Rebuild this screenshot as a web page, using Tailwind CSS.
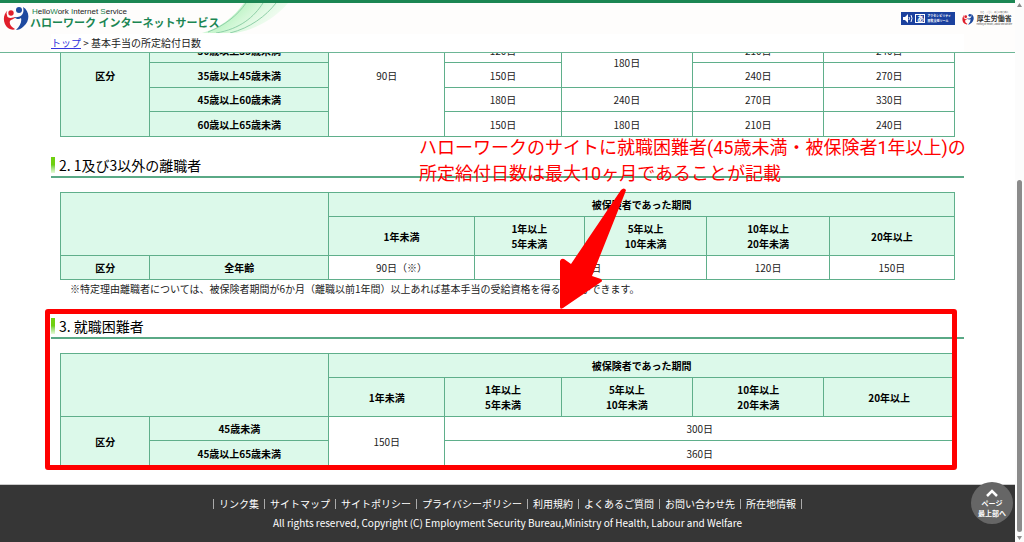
<!DOCTYPE html>
<html lang="ja">
<head>
    <meta charset="UTF-8">
    <meta name="viewport" content="width=device-width, initial-scale=1.0">
    <title>基本手当の所定給付日数</title>
    <script src="https://cdn.jsdelivr.net/npm/@tailwindcss/browser@4"></script>
</head>
<body class="flex min-h-screen overflow-hidden bg-white font-['Noto_Sans_CJK_JP',sans-serif] text-[10px] text-[#222]">
    <div class="flex min-w-0 flex-1 flex-col">

        <!-- header -->
        <header class="border-b border-[#6db696] bg-[#fefdfc]">
            <div class="flex h-[34px] items-center justify-between border-t-[3px] border-[#1b8653] pr-[3px]">
                <div class="relative flex h-full w-[290px] items-center pb-[2px] pl-[3px]">
                    <svg class="absolute top-0 right-0 h-[30px] w-[90px]" viewBox="0 0 90 30" fill="none" aria-hidden="true">
                        <defs>
                            <linearGradient id="wave" x1="0" y1="0.2" x2="1" y2="0.6">
                                <stop offset="0" stop-color="#c8f7cf" stop-opacity="0"/>
                                <stop offset="0.4" stop-color="#c4f5cb"/>
                                <stop offset="1" stop-color="#effdef" stop-opacity="0.3"/>
                            </linearGradient>
                        </defs>
                        <path d="M2 30C20 25 34 14 44 0H88C76 14 58 26 36 30Z" fill="url(#wave)"/>
                        <path d="M8 29C24 23 38 12 46 0M16 30C40 26 54 14 63 0M30 30C50 25 66 13 76 0" stroke="#8fd0a8"/>
                    </svg>
                    <svg class="h-6 w-[26px] shrink-0" viewBox="0 0 26 24" aria-hidden="true">
                        <circle cx="8" cy="7" r="2.700" fill="#e01e2b"/>
                        <path d="M5 4C-1 9 0 18 5 22C8 24 11 24 12 23C8 21 6 18 7 15C8 13 10 14 13 11C9 12 4 13 4 9C3 7 4 5 5 4Z" fill="#e01e2b"/>
                        <circle cx="16" cy="4" r="3" fill="#1f4aa0"/>
                        <path d="M20 1C27 5 27 15 21 20C18 23 15 24 13 24C17 20 19 16 18 12C16 14 13 13 11 11C17 12 22 9 20 1Z" fill="#1f4aa0"/>
                    </svg>
                    <div class="relative pl-px leading-none">
                        <p class="pl-[2px] font-['Liberation_Sans',sans-serif] text-[8px] leading-[8px] text-[#222]"><span class="text-[#1b8653]">H</span>ello<span class="text-[#1b8653]">W</span>ork <span class="text-[#1b8653]">I</span>nternet <span class="text-[#1b8653]">S</span>ervice</p>
                        <p class="text-[11px] leading-[12px] font-bold whitespace-nowrap text-[#1b8653]">ハローワーク インターネットサービス</p>
                    </div>
                </div>
                <div class="flex items-center gap-[7px]">
                    <a href="#" class="flex h-[13px] w-[54px] items-center gap-[2px] bg-[#1b419e] px-[2px] text-white">
                        <svg class="h-[9px] w-[10px] shrink-0" viewBox="0 0 10 9" fill="none" aria-hidden="true">
                            <path d="M0 3H2L5 0V9L2 6H0Z" fill="#fff"/>
                            <path d="M6 3Q7 4 6 6M8 1Q10 4 8 8" stroke="#fff"/>
                        </svg>
                        <span class="flex h-[9px] w-[10px] shrink-0 items-center justify-center border border-white text-[7px] leading-none font-bold">あ</span>
                        <span class="text-[3px] leading-[5px] font-bold whitespace-nowrap">アクセシビリティ<br>閲覧支援ツール</span>
                    </a>
                    <a href="#" class="flex items-center gap-[2px]">
                        <svg class="h-3 w-[12px]" viewBox="0 0 26 24" aria-hidden="true">
                            <circle cx="8" cy="7" r="3" fill="#e01e2b"/>
                            <path d="M5 3C-1 9 0 18 5 22C8 24 11 24 12 23C8 21 6 18 7 15C8 13 10 14 13 11C9 12 4 13 4 9C3 7 4 5 5 3Z" fill="#e01e2b"/>
                            <circle cx="17" cy="4" r="3" fill="#1f4aa0"/>
                            <path d="M20 1C27 5 27 15 21 20C18 23 15 24 13 24C17 20 19 16 18 12C16 14 13 13 11 11C17 12 22 9 20 1Z" fill="#1f4aa0"/>
                        </svg>
                        <span class="flex flex-col items-center whitespace-nowrap text-[#333]">
                            <span class="text-[2px] leading-[3px]">ひと、くらし、みらいのために</span>
                            <span class="text-[7px] leading-[9px] font-bold">厚生労働省</span>
                            <span class="text-[2px] leading-[3px]">Ministry of Health, Labour and Welfare</span>
                        </span>
                    </a>
                </div>
            </div>
            <nav class="mx-[51px] h-[18px] bg-white leading-[18px]">
                <a href="#" class="text-[#3333dd] underline">トップ</a> &gt; 基本手当の所定給付日数
            </nav>
        </header>

        <main class="relative mx-[51px] flex-1">
            <!-- scrolled part of the first table -->
            <div class="flex h-[84px] flex-col justify-end overflow-hidden px-[9px]">
                <table class="w-full table-fixed border-collapse text-center leading-[15px] [&_td]:border [&_td]:border-[#5faf8b] [&_th]:border [&_th]:border-[#5faf8b] [&_th]:bg-[#dcf9ea] [&_th]:text-black">
                    <colgroup>
                        <col class="w-[10%]"><col class="w-[20%]"><col class="w-[13%]"><col class="w-[13%]"><col class="w-[14.700%]"><col class="w-[14.700%]"><col>
                    </colgroup>
                    <tbody>
                        <tr class="h-6"><th rowspan="5">区分</th><th></th><td rowspan="5">90日</td><td></td><td></td><td></td><td></td></tr>
                        <tr class="h-[25px]"><th>30歳以上35歳未満</th><td>120日</td><td rowspan="2">180日</td><td>210日</td><td>240日</td></tr>
                        <tr class="h-[25px]"><th>35歳以上45歳未満</th><td>150日</td><td>240日</td><td>270日</td></tr>
                        <tr class="h-6"><th>45歳以上60歳未満</th><td>180日</td><td>240日</td><td>270日</td><td>330日</td></tr>
                        <tr class="h-[25px]"><th>60歳以上65歳未満</th><td>150日</td><td>180日</td><td>210日</td><td>240日</td></tr>
                    </tbody>
                </table>
            </div>

            <section class="mt-[15px]">
                <h2 class="flex h-[26px] items-center gap-1 border-b-2 border-[#5aa986] pt-[2px] text-[14px] text-black"><span class="h-4 w-1 bg-linear-to-b from-[#6fd010] from-50% to-[#e8fad8]"></span>2. 1及び3以外の離職者</h2>
                <div class="px-[9px] pt-[14px]">
                    <table class="w-full table-fixed border-collapse text-center leading-[15px] [&_td]:border [&_td]:border-[#5faf8b] [&_th]:border [&_th]:border-[#5faf8b] [&_th]:bg-[#dcf9ea] [&_th]:text-black">
                        <colgroup>
                            <col class="w-[10%]"><col class="w-[20%]"><col class="w-[16.300%]"><col class="w-[12.300%]"><col class="w-[13.700%]"><col class="w-[13.700%]"><col>
                        </colgroup>
                        <thead>
                            <tr class="h-6"><th colspan="2" rowspan="2"></th><th colspan="5">被保険者であった期間</th></tr>
                            <tr class="h-[39px]"><th>1年未満</th><th>1年以上<br>5年未満</th><th>5年以上<br>10年未満</th><th>10年以上<br>20年未満</th><th>20年以上</th></tr>
                        </thead>
                        <tbody>
                            <tr class="h-6"><th>区分</th><th>全年齢</th><td>90日（※）</td><td colspan="2">90日</td><td>120日</td><td>150日</td></tr>
                        </tbody>
                    </table>
                    <p class="pt-px pl-[10px] leading-4">※特定理由離職者については、被保険者期間が6か月（離職以前1年間）以上あれば基本手当の受給資格を得ることができます。</p>
                </div>
            </section>

            <section class="relative mt-4">
                <h2 class="flex h-[26px] items-center gap-1 border-b-2 border-[#5aa986] pt-[2px] text-[14px] text-black"><span class="h-4 w-1 bg-linear-to-b from-[#6fd010] from-50% to-[#e8fad8]"></span>3. 就職困難者</h2>
                <div class="px-[9px] pt-[14px]">
                    <table class="w-full table-fixed border-collapse text-center leading-[15px] [&_td]:border [&_td]:border-[#5faf8b] [&_th]:border [&_th]:border-[#5faf8b] [&_th]:bg-[#dcf9ea] [&_th]:text-black">
                        <colgroup>
                            <col class="w-[10%]"><col class="w-[20%]"><col class="w-[13%]"><col class="w-[13%]"><col class="w-[14.700%]"><col class="w-[14.700%]"><col>
                        </colgroup>
                        <thead>
                            <tr class="h-6"><th colspan="2" rowspan="2"></th><th colspan="5">被保険者であった期間</th></tr>
                            <tr class="h-[39px]"><th>1年未満</th><th>1年以上<br>5年未満</th><th>5年以上<br>10年未満</th><th>10年以上<br>20年未満</th><th>20年以上</th></tr>
                        </thead>
                        <tbody>
                            <tr class="h-6"><th rowspan="2">区分</th><th>45歳未満</th><td rowspan="2">150日</td><td colspan="4">300日</td></tr>
                            <tr class="h-[25px]"><th>45歳以上65歳未満</th><td colspan="4">360日</td></tr>
                        </tbody>
                    </table>
                </div>
                <!-- red frame round the section -->
                <div class="absolute -top-1 right-[7px] -bottom-1 -left-[6px] rounded-[3px] border-[5px] border-[#ff0000]"></div>
            </section>

            <!-- note and arrow -->
            <p class="absolute top-[82px] left-[368px] font-[Roboto,'Noto_Sans_CJK_JP',sans-serif] text-[18px] leading-[26px] whitespace-nowrap text-[#ff0000]">ハローワークのサイトに就職困難者(45歳未満・被保険者1年以上)の<br>所定給付日数は最大10ヶ月であることが記載</p>
            <svg class="absolute top-[135px] left-[508px] h-[124px] w-[70px]" viewBox="0 0 70 124" fill="#ff0000" aria-hidden="true">
                <path d="M62 2Q65 -1 67 2L66 5L33 88L42 91Q44 93 42 94L4 120Q1 122 1 119V73Q2 70 5 71L12 76Z"/>
            </svg>
        </main>

        <footer class="relative h-[58px] border-t border-[#ccc] bg-[#363636] pt-[14px] text-center text-white">
            <ul class="flex justify-center leading-[10px]">
                <li class="border-l border-[#aaa] px-[5px]"><a href="#">リンク集</a></li>
                <li class="border-l border-[#aaa] px-[5px]"><a href="#">サイトマップ</a></li>
                <li class="border-l border-[#aaa] px-[5px]"><a href="#">サイトポリシー</a></li>
                <li class="border-l border-[#aaa] px-[5px]"><a href="#">プライバシーポリシー</a></li>
                <li class="border-l border-[#aaa] px-[5px]"><a href="#">利用規約</a></li>
                <li class="border-l border-[#aaa] px-[5px]"><a href="#">よくあるご質問</a></li>
                <li class="border-l border-[#aaa] px-[5px]"><a href="#">お問い合わせ先</a></li>
                <li class="border-x border-[#aaa] px-[5px]"><a href="#">所在地情報</a></li>
            </ul>
            <p class="mt-1 leading-5">All rights reserved, Copyright (C) Employment Security Bureau,Ministry of Health, Labour and Welfare</p>
            <button type="button" class="absolute right-[2px] bottom-[18px] flex size-[42px] flex-col items-center justify-center rounded-full bg-[#666] text-[7px] leading-[10px] font-bold text-white">
                <svg class="mb-px h-2 w-3" viewBox="0 0 12 8" fill="none" stroke="#fff" stroke-width="2.500" aria-hidden="true"><path d="M1 7L6 2L11 7"/></svg>
                ページ<br>最上部へ
            </button>
        </footer>
    </div>

    <!-- scroll bar -->
    <div class="flex w-[9px] flex-col items-center bg-[#fcfcfc] pt-[3px] pb-[2px]" aria-hidden="true">
        <svg class="h-1 w-[5px]" viewBox="0 0 5 4" fill="#8b8b8b"><path d="M2.500 0L5 4H0Z"/></svg>
        <div class="mt-[173px] mb-1 w-[5px] flex-1 rounded-full bg-[#8b8b8b]"></div>
        <svg class="h-1 w-[5px]" viewBox="0 0 5 4" fill="#8b8b8b"><path d="M0 0H5L2.500 4Z"/></svg>
    </div>
</body>
</html>
